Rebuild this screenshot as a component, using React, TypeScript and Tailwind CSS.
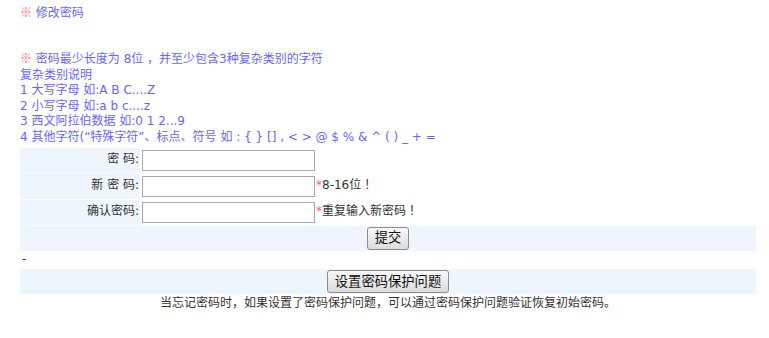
const font = "font-['DejaVu_Sans',_'Noto_Sans_CJK_SC',_sans-serif]";
const cjk = "leading-[0] font-['Noto_Sans_CJK_SC',_sans-serif]";
const bang = "leading-[0] font-['Noto_Sans_CJK_JP',_sans-serif]";

const rows = [
  { label: '密 码:', hint: '' },
  { label: '新 密 码:', hint: '8-16位' },
  { label: '确认密码:', hint: '重复输入新密码' },
];

const rules = [
  '1 大写字母 如:A B C....Z',
  '2 小写字母 如:a b c....z',
  '3 西文阿拉伯数据 如:0 1 2...9',
  '4 其他字符(“特殊字符”、标点、符号 如 : { } [] , < > @ $ % & ^ ( ) _ + =',
];

function Btn({ children }: { children: React.ReactNode }) {
  return (
    <button className="h-[23px] px-[7px] text-[13.3px] leading-none text-[#111] border border-[#8c8c8c] rounded-[3px] bg-linear-to-b from-[#f8f8f8] to-[#dcdcdc]">
      {children}
    </button>
  );
}

export default function App() {
  return (
    <div className={`${font} text-[12px] leading-[15.6px] bg-white w-[769px] h-[338px] pl-[20px]`}>
      <div className="pt-[6px] text-[#6666ff]">
        <span className={`${cjk} text-[#ff6666]`}>※</span> 修改密码
      </div>

      <div className="mt-[30.4px] text-[#6666ff]">
        <div>
          <span className={`${cjk} text-[#ff6666]`}>※</span> 密码最少长度为 8位 ，并至少包含3种复杂类别的字符
        </div>
        <div>复杂类别说明</div>
        {rules.map(r => (
          <div key={r} className="whitespace-pre">{r}</div>
        ))}
      </div>

      <div className="mt-[2px] w-[736px] grid grid-cols-[120px_1fr] gap-px text-[#333]">
        {rows.map(r => (
          <div key={r.label} className="contents">
            <div className="h-[25px] bg-[#eef5fd] flex items-center justify-end pr-[1px] whitespace-pre">{r.label}</div>
            <div className="h-[25px] flex items-center pl-[1px]">
              <input type="password" className="w-[173px] h-[21px] border border-[#a9a9a9] bg-white outline-none" />
              {r.hint && (
                <span className="ml-px">
                  <span className="text-[#ff6666]">*</span>
                  {r.hint}
                  <span className={bang}>！</span>
                </span>
              )}
            </div>
          </div>
        ))}
        <div className="col-span-2 h-[25px] bg-[#eef5fd] flex items-center justify-center">
          <Btn>提交</Btn>
        </div>
      </div>

      <div className="mt-[1px] pl-[2px] text-[#333]">-</div>

      <div className="mt-[2px] w-[736px] h-[25px] bg-[#eef5fd] flex items-center justify-center">
        <Btn>设置密码保护问题</Btn>
      </div>
      <div className="w-[736px] mt-[2px] text-center text-[#333]">
        当忘记密码时，如果设置了密码保护问题，可以通过密码保护问题验证恢复初始密码。
      </div>
    </div>
  );
}
